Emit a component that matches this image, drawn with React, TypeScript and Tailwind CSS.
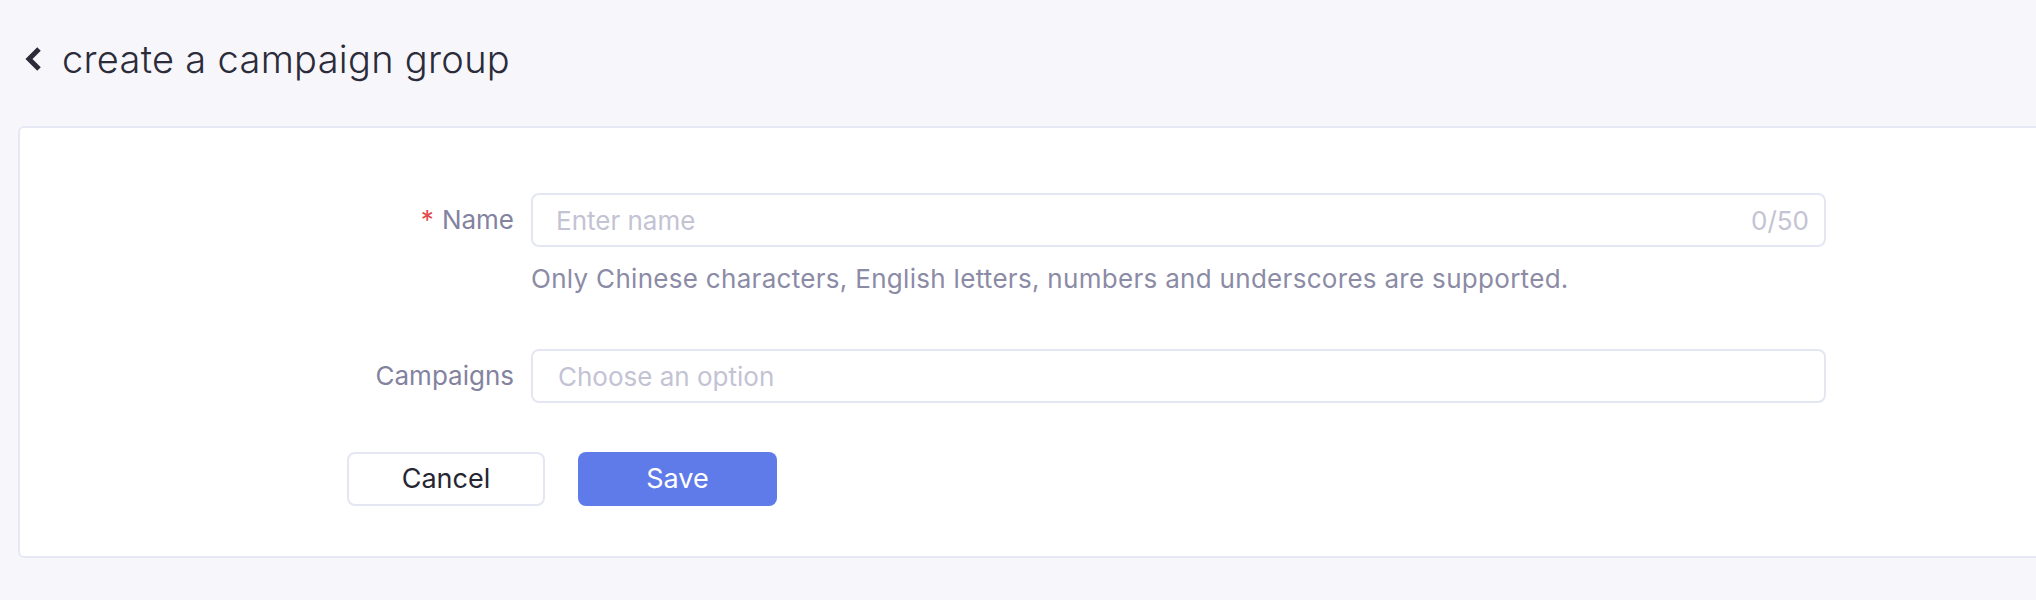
import { useState } from "react";

function BackIcon() {
  return (
    <svg width="20" height="26" viewBox="0 0 20 26" fill="none" className="shrink-0">
      <polyline points="16,3 6,13 16,23" stroke="#2b2b3a" strokeWidth="5" strokeLinejoin="miter" />
    </svg>
  );
}

export default function App() {
  const [name, setName] = useState("");

  return (
    <div className="min-h-screen w-full overflow-hidden bg-[#f7f7fb] font-['Inter',sans-serif]">
      {/* Header */}
      <div className="h-[126px] flex items-center pl-[23px] pb-[9px] gap-[19px]">
        <BackIcon />
        <h1 className="text-[38px] leading-[46px] font-light tracking-[0.3px] text-[#2b2b3a]">
          create a campaign group
        </h1>
      </div>

      {/* Card */}
      <div className="ml-[18px] -mr-[20px] bg-white border-2 border-[#e6e8f4] rounded-[6px] pt-[65px] pb-[50px] pl-[327px]">
        {/* Name */}
        <div className="flex items-center gap-[17px]">
          <label className="w-[167px] text-right text-[26px] leading-[36px] text-[#8383a0]">
            <span className="text-[#e5484d] mr-[8px]">*</span>Name
          </label>
          <div className="w-[1295px] h-[54px] border-2 border-[#e4e6f3] rounded-[8px] flex items-center pl-[23px] pr-[15px]">
            <input
              value={name}
              onChange={(e) => setName(e.target.value.slice(0, 50))}
              placeholder="Enter name"
              className="flex-1 bg-transparent outline-none text-[26px] text-[#2b2b3a] placeholder:text-[#c3c3d4]"
            />
            <span className="text-[26px] text-[#c3c3d4]">{name.length}/50</span>
          </div>
        </div>
        <p className="ml-[184px] mt-[14px] text-[26px] leading-[36px] tracking-[0.3px] text-[#8b8ba6]">
          Only Chinese characters, English letters, numbers and underscores are supported.
        </p>

        {/* Campaigns */}
        <div className="flex items-center gap-[17px] mt-[52px]">
          <label className="w-[167px] text-right text-[26px] leading-[36px] text-[#8383a0]">
            Campaigns
          </label>
          <div className="w-[1295px] h-[54px] border-2 border-[#e4e6f3] rounded-[8px] flex items-center pl-[25px] pr-[15px]">
            <span className="text-[26px] text-[#c3c3d4]">Choose an option</span>
          </div>
        </div>

        {/* Buttons */}
        <div className="flex gap-[33px] mt-[49px]">
          <button className="w-[198px] h-[54px] border-2 border-[#e4e6f3] rounded-[8px] bg-white text-[27px] text-[#262633]">
            Cancel
          </button>
          <button className="w-[199px] h-[54px] rounded-[8px] bg-[#5f7be9] text-[27px] text-white">
            Save
          </button>
        </div>
      </div>
    </div>
  );
}
